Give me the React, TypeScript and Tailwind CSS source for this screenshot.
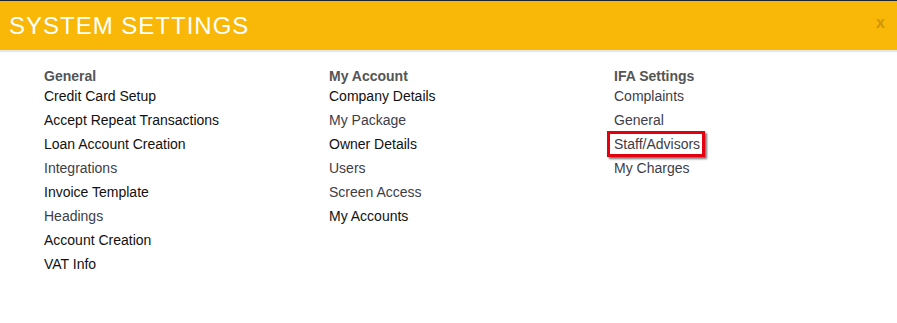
export default function App() {
  const columns = [
    {
      title: "General",
      items: [
        { label: "Credit Card Setup", visited: false },
        { label: "Accept Repeat Transactions", visited: false },
        { label: "Loan Account Creation", visited: false },
        { label: "Integrations", visited: true },
        { label: "Invoice Template", visited: false },
        { label: "Headings", visited: true },
        { label: "Account Creation", visited: false },
        { label: "VAT Info", visited: false },
      ],
    },
    {
      title: "My Account",
      items: [
        { label: "Company Details", visited: false },
        { label: "My Package", visited: true },
        { label: "Owner Details", visited: false },
        { label: "Users", visited: true },
        { label: "Screen Access", visited: true },
        { label: "My Accounts", visited: false },
      ],
    },
    {
      title: "IFA Settings",
      items: [
        { label: "Complaints", visited: true },
        { label: "General", visited: true },
        { label: "Staff/Advisors", visited: true, highlight: true },
        { label: "My Charges", visited: true },
      ],
    },
  ];

  return (
    <div className="w-[897px] h-[323px] bg-white font-['Liberation_Sans',Arial,sans-serif]">
      {/* Header */}
      <div className="h-[52px] bg-[#f9b707] border-t border-[#1c2530] border-b-2 border-b-[#e6e6e6] flex items-center justify-between pl-[9px] pr-[12px]">
        <h1 className="text-white text-[24px] tracking-[1px] leading-none mt-[1px]">SYSTEM SETTINGS</h1>
        <span className="text-[#cf9708] font-bold text-[16px] leading-none -mt-[5px]">x</span>
      </div>

      {/* Menu columns */}
      <div className="grid grid-cols-[285px_285px_1fr] pl-[44px] pt-[15px]">
        {columns.map((col) => (
          <div key={col.title}>
            <div className="text-[#555] font-bold text-[14px] leading-[19px]">{col.title}</div>
            <ul className="flex flex-col gap-1">
              {col.items.map((item) => (
                <li key={item.label} className="text-[14px] leading-[20px]">
                  <span
                    className={`relative ${item.visited ? "text-[#3d3d48]" : "text-[#111]"}`}
                  >
                    {item.label}
                    {item.highlight && (
                      <span className="absolute -left-[7px] -right-[5px] -top-[5px] -bottom-[5px] border-[3px] border-[#e3000f] shadow-[2px_2px_2px_rgba(0,0,0,0.55)]" />
                    )}
                  </span>
                </li>
              ))}
            </ul>
          </div>
        ))}
      </div>
    </div>
  );
}
